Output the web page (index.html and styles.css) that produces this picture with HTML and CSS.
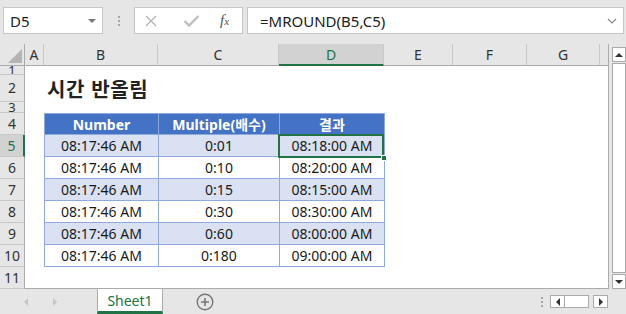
FILE: index.html
```html
<!DOCTYPE html>
<html lang="ko">
<head>
    <meta charset="UTF-8">
    <title>시간 반올림</title>
    <link rel="stylesheet" href="styles.css">
</head>
<body>
    <!-- Formula bar -->
    <div class="formula-bar">
        <div class="name-box">D5<span class="caret"></span></div>
        <div class="bar-dots"><i></i><i></i><i></i></div>
        <div class="fx-box">
            <svg class="ic-cancel" width="12" height="12" viewBox="0 0 12 12"><path d="M1 1 L11 11 M11 1 L1 11" stroke="#b4b4b4" stroke-width="1.3" fill="none"/></svg>
            <svg class="ic-enter" width="17" height="14" viewBox="0 0 17 14"><path d="M1.5 7 L6 11.5 L15.5 2" stroke="#bdbdbd" stroke-width="2.4" fill="none"/></svg>
            <span class="fx">f<small>x</small></span>
        </div>
        <div class="formula-input">=MROUND(B5,C5)
            <svg class="chevron" width="10" height="6" viewBox="0 0 10 6"><path d="M1 1 L5 5 L9 1" stroke="#888" stroke-width="1.2" fill="none"/></svg>
        </div>
    </div>

    <!-- Sheet -->
    <div class="sheet">
        <div class="grid">
            <div class="col-head corner"><span class="tri"></span></div>
            <div class="col-head">A</div>
            <div class="col-head">B</div>
            <div class="col-head">C</div>
            <div class="col-head active">D</div>
            <div class="col-head">E</div>
            <div class="col-head">F</div>
            <div class="col-head">G</div>
            <div class="col-head last"></div>

            <div class="row-head short">1</div>
            <div class="row-head">2</div>
            <div class="row-head short">3</div>
            <div class="row-head">4</div>
            <div class="row-head active">5</div>
            <div class="row-head">6</div>
            <div class="row-head">7</div>
            <div class="row-head">8</div>
            <div class="row-head">9</div>
            <div class="row-head">10</div>
            <div class="row-head">11</div>

            <div class="title">시간 반올림</div>

            <div class="data">
                <div class="th">Number</div>
                <div class="th">Multiple(배수)</div>
                <div class="th">결과</div>

                <div class="td band">08:17:46 AM</div>
                <div class="td band">0:01</div>
                <div class="td band">08:18:00 AM</div>

                <div class="td">08:17:46 AM</div>
                <div class="td">0:10</div>
                <div class="td">08:20:00 AM</div>

                <div class="td band">08:17:46 AM</div>
                <div class="td band">0:15</div>
                <div class="td band">08:15:00 AM</div>

                <div class="td">08:17:46 AM</div>
                <div class="td">0:30</div>
                <div class="td">08:30:00 AM</div>

                <div class="td band">08:17:46 AM</div>
                <div class="td band">0:60</div>
                <div class="td band">08:00:00 AM</div>

                <div class="td">08:17:46 AM</div>
                <div class="td">0:180</div>
                <div class="td">09:00:00 AM</div>
            </div>

            <div class="selection"><span class="handle"></span></div>
        </div>

        <div class="vscroll">
            <div class="sb-btn"><span class="arrow-up"></span></div>
            <div class="sb-thumb"></div>
            <div class="sb-btn"><span class="arrow-down"></span></div>
        </div>
    </div>

    <!-- Sheet tabs -->
    <div class="tabs">
        <div class="tab-nav">
            <span class="arrow-left light"></span>
            <span class="arrow-right light"></span>
        </div>
        <div class="tab">Sheet1</div>
        <div class="add-sheet">
            <svg width="18" height="18" viewBox="0 0 18 18"><circle cx="9" cy="9" r="7.8" stroke="#777" stroke-width="1.4" fill="none"/><path d="M9 5 V13 M5 9 H13" stroke="#777" stroke-width="1.6"/></svg>
        </div>
        <div class="tab-spacer"></div>
        <div class="bar-dots small"><i></i><i></i><i></i></div>
        <div class="hscroll">
            <div class="sb-btn"><span class="arrow-left"></span></div>
            <div class="sb-thumb"></div>
            <div class="sb-btn"><span class="arrow-right"></span></div>
        </div>
    </div>
</body>
</html>
```

FILE: styles.css
```css
* {
    margin: 0;
    padding: 0;
    box-sizing: border-box;
}

body {
    width: 626px;
    height: 314px;
    overflow: hidden;
    background-color: #e6e6e6;
    color: #222;
    font-family: "Noto Sans", "Noto Sans CJK KR", sans-serif;
}

/* Formula bar */
.formula-bar {
    height: 44px;
    display: flex;
    align-items: flex-start;
    padding: 7px 0 0 3px;
}

.name-box,
.fx-box,
.formula-input {
    height: 27px;
    background-color: #fff;
    border: 1px solid #c6c6c6;
    display: flex;
    align-items: center;
}

.name-box {
    width: 100px;
    padding-left: 6px;
    font-size: 15px;
    position: relative;
}

.caret {
    position: absolute;
    right: 6px;
    top: 11px;
    border-left: 4px solid transparent;
    border-right: 4px solid transparent;
    border-top: 4px solid #777;
}

.bar-dots {
    width: 31px;
    height: 27px;
    display: flex;
    flex-direction: column;
    align-items: center;
    justify-content: center;
    gap: 2px;
}

.bar-dots i {
    width: 2px;
    height: 2px;
    background-color: #a6a6a6;
}

.fx-box {
    width: 109px;
    padding-left: 10px;
}

.ic-enter {
    margin-left: 26px;
}

.fx {
    margin-left: 20px;
    font-family: "Liberation Serif", serif;
    font-style: italic;
    font-size: 15px;
    color: #555;
}

.fx small {
    font-size: 11px;
}

.formula-input {
    width: 377px;
    margin-left: 4px;
    padding-left: 12px;
    font-size: 15px;
    position: relative;
}

.chevron {
    position: absolute;
    right: 6px;
    top: 10px;
}

/* Sheet grid */
.sheet {
    display: flex;
    height: 245px;
}

.grid {
    width: 609px;
    display: grid;
    grid-template-columns: 25px 19px 114px 121px 105px 69px 74px 73px 8px;
    grid-template-rows: 22px 9px 27px 11px repeat(8, 22px);
    background-color: #fff;
    border-right: 1px solid #ababab;
    border-bottom: 1px solid #ababab;
}

.col-head {
    grid-row: 1;
    background-color: #e6e6e6;
    border-right: 1px solid #c8c8c8;
    border-bottom: 1px solid #ababab;
    font-size: 14px;
    color: #333;
    display: flex;
    align-items: center;
    justify-content: center;
}

.col-head.last {
    border-right: none;
}

.corner {
    position: relative;
    border-right-color: #ababab;
}

.tri {
    position: absolute;
    right: 2px;
    bottom: 2px;
    border-left: 14px solid transparent;
    border-bottom: 14px solid #b4b4b4;
}

.col-head.active {
    background-color: #d2d2d2;
    color: #217346;
    border-bottom: 2px solid #217346;
}

.row-head {
    grid-column: 1;
    background-color: #e6e6e6;
    border-right: 1px solid #ababab;
    border-bottom: 1px solid #c8c8c8;
    font-size: 14px;
    line-height: 20px;
    color: #333;
    text-align: center;
    overflow: hidden;
    display: flex;
    align-items: center;
    justify-content: center;
}

.row-head.short {
    font-size: 13px;
    line-height: 10px;
}

.row-head.active {
    background-color: #d2d2d2;
    color: #217346;
    border-right: 2px solid #217346;
}

.title {
    grid-column: 3 / 6;
    grid-row: 3;
    padding-left: 3px;
    font-family: "Noto Sans CJK KR", sans-serif;
    font-weight: bold;
    font-size: 20px;
    letter-spacing: 0.6px;
    display: flex;
    align-items: center;
}

/* Data table */
.data {
    grid-column: 3 / 6;
    grid-row: 5 / 12;
    display: grid;
    grid-template-columns: 114px 121px 105px;
    grid-template-rows: repeat(7, 22px);
    border-left: 1px solid #8ea9db;
}

.th,
.td {
    border-right: 1px solid #8ea9db;
    border-bottom: 1px solid #8ea9db;
    display: flex;
    align-items: center;
    justify-content: center;
    font-size: 14px;
}

.th {
    background-color: #4472c4;
    color: #fff;
    font-weight: bold;
    border-top: 1px solid #8ea9db;
}

.td {
    color: #1a1a1a;
}

.td.band {
    background-color: #d9e1f2;
}

.selection {
    grid-column: 5;
    grid-row: 6;
    margin: -1px 0 -1px -1px;
    border: 2px solid #217346;
    position: relative;
}

.handle {
    position: absolute;
    right: -5px;
    bottom: -5px;
    width: 6px;
    height: 6px;
    background-color: #217346;
    border: 1px solid #fff;
}

/* Scroll bars */
.vscroll {
    width: 14px;
    margin-left: 3px;
    display: flex;
    flex-direction: column;
    padding-top: 3px;
    gap: 1px;
}

.sb-btn {
    background-color: #fff;
    border: 1px solid #ababab;
    display: flex;
    align-items: center;
    justify-content: center;
}

.vscroll .sb-btn {
    height: 15px;
}

.sb-thumb {
    background-color: #fff;
    border: 1px solid #ababab;
    flex: 1;
}

.arrow-up {
    border-left: 4px solid transparent;
    border-right: 4px solid transparent;
    border-bottom: 4px solid #333;
}

.arrow-down {
    border-left: 4px solid transparent;
    border-right: 4px solid transparent;
    border-top: 4px solid #333;
}

.arrow-left {
    border-top: 4px solid transparent;
    border-bottom: 4px solid transparent;
    border-right: 4px solid #333;
}

.arrow-right {
    border-top: 4px solid transparent;
    border-bottom: 4px solid transparent;
    border-left: 4px solid #333;
}

.arrow-left.light {
    border-right-color: #c4c4c4;
}

.arrow-right.light {
    border-left-color: #c4c4c4;
}

/* Tabs */
.tabs {
    height: 25px;
    display: flex;
    align-items: stretch;
}

.tab-nav {
    width: 97px;
    display: flex;
    align-items: center;
    gap: 25px;
    padding-left: 24px;
}

.tab {
    width: 66px;
    background-color: #fff;
    border-left: 1px solid #ababab;
    border-right: 1px solid #ababab;
    border-bottom: 3px solid #217346;
    color: #217346;
    font-size: 14px;
    display: flex;
    align-items: center;
    justify-content: center;
}

.add-sheet {
    width: 84px;
    display: flex;
    align-items: center;
    justify-content: center;
}

.tab-spacer {
    flex: 1;
}

.bar-dots.small {
    width: 16px;
    height: 25px;
}

.hscroll {
    display: flex;
    align-items: center;
    margin: 0 18px 0 0;
}

.hscroll .sb-btn {
    width: 15px;
    height: 13px;
}

.hscroll .sb-thumb {
    width: 24px;
    height: 13px;
    flex: none;
    border-left: none;
    margin-right: 4px;
}
```
